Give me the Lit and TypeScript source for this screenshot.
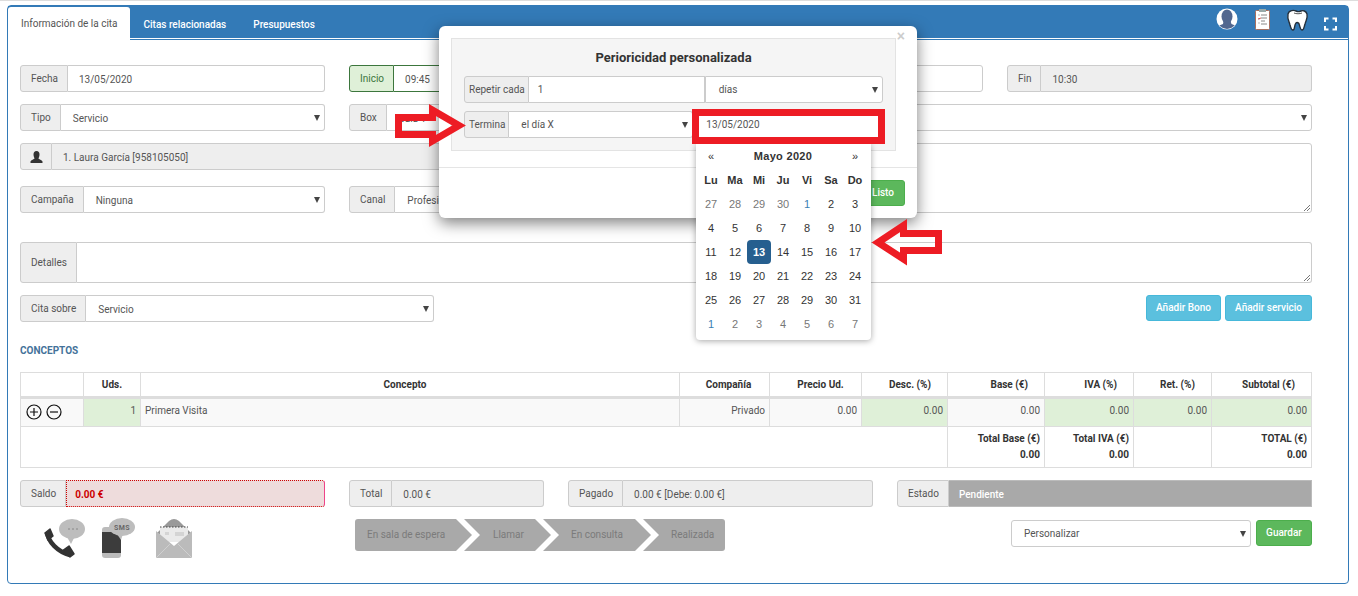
import { LitElement, html, css, svg } from "lit";
import { customElement } from "lit/decorators.js";

const resize = html`<svg class="grip" width="9" height="9" viewBox="0 0 9 9"><path d="M8 2 2 8M8 5 5 8" stroke="#777" fill="none"/></svg>`;

const weeks: [number, string][][] = [
  [[27,"o"],[28,"o"],[29,"o"],[30,"o"],[1,"b"],[2,""],[3,""]],
  [[4,""],[5,""],[6,""],[7,""],[8,""],[9,""],[10,""]],
  [[11,""],[12,""],[13,"s"],[14,""],[15,""],[16,""],[17,""]],
  [[18,""],[19,""],[20,""],[21,""],[22,""],[23,""],[24,""]],
  [[25,""],[26,""],[27,""],[28,""],[29,""],[30,""],[31,""]],
  [[1,"b"],[2,"o"],[3,"o"],[4,"o"],[5,"o"],[6,"o"],[7,"o"]],
];

@customElement("app-root")
export class AppRoot extends LitElement {
  static styles = css`
    :host { display: block; position: relative; width: 1358px; height: 596px; overflow: hidden; background: #fff;
      font: 10px/14px Roboto, "Liberation Sans", sans-serif; color: #555; }
    * { box-sizing: border-box; }
    .topline { height: 1px; background: #ddd; }
    .frame { margin: 4px 0 0 7px; width: 1342px; height: 579px; border: 1px solid #337ab7; border-radius: 4px; }
    .tabs { height: 34px; background: #337ab7; border-bottom: 1px solid #337ab7; box-shadow: inset 0 -1px 0 #fff; display: flex; padding: 1px 0 0 0; align-items: stretch; position: relative; }
    .tab { color: #fff; font-weight: 500; padding: 11px 13.5px 0; font-size: 10px; }
    .tab.on { background: #fff; color: #555; font-weight: 400; width: 122px; margin-bottom: -1px; border-radius: 3px 3px 0 0; padding: 10px 0 0 13px; }
    .tools { margin-left: auto; margin-right: 6px; margin-top: -1px; display: flex; align-items: flex-start; }
    .tools svg { display: block; }
    .body { padding: 25px 36px 0 12px; }
    .grid { display: grid; grid-template-columns: repeat(4, 305px); column-gap: 24px; row-gap: 12px; grid-template-rows: 27px 27px 31px 27px; }
    .ig { display: flex; height: 27px; }
    .addon { display: flex; align-items: center; padding: 0 9px 0 10px; background: #eee; border: 1px solid #ccc; border-radius: 3px 0 0 3px; height: 27px; color: #555; white-space: nowrap; flex: none; }
    .ctl { flex: 1; min-width: 0; display: flex; align-items: center; padding: 2px 11px 0; border: 1px solid #ccc; border-left: 0; border-radius: 0 3px 3px 0; background: #fff; position: relative; white-space: nowrap; overflow: hidden; }
    .ctl.sel { padding: 2px 11px 0 12px; }
    .ctl.sel::after { content: ""; position: absolute; right: 4px; top: 10px; border: 3.5px solid transparent; border-top: 6px solid #444; border-bottom: 0; }
    .ctl.ro { background: #eee; }
    .ig.green .addon { background: #dff0d8; border-color: #3c763d; color: #3c763d; }
    .ig.green .ctl { border-color: #3c763d; }
    .w2 { grid-column: span 2; }
    .note { grid-column: 3 / span 2; grid-row: 3 / span 2; border: 1px solid #ccc; border-radius: 3px; position: relative; height: 70px; }
    .grip { position: absolute; right: 0; bottom: 0; }
    .addon.user { padding: 0 8px 0 9px; }
    .plain { height: 27px; border: 1px solid #ccc; border-radius: 3px; position: relative; }
    .plain.sel::after { content: ""; position: absolute; right: 4px; top: 10px; border: 3.5px solid transparent; border-top: 6px solid #444; border-bottom: 0; }
    .details { margin-top: 29px; height: 41px; display: flex; }
    .details .addon { height: 41px; }
    .details .area { flex: 1; border: 1px solid #ccc; border-left: 0; border-radius: 0 3px 3px 0; position: relative; }
    .actions { margin-top: 12px; display: flex; align-items: flex-start; }
    .actions .ig { width: 414px; }
    .right { margin-left: auto; display: flex; gap: 4px; }
    .btn { height: 26px; display: flex; align-items: center; justify-content: center; color: #fff; font-weight: 500; border-radius: 3px; border: 1px solid #46b8da; background: #5bc0de; }
    .bono { width: 75px; } .serv { width: 87px; }
    .title { margin-top: 22px; height: 14px; font-weight: 700; color: #44729a; }
    table { margin-top: 14px; border-collapse: collapse; table-layout: fixed; width: 1291px; }
    th, td { border: 1px solid #ddd; padding: 0 4px; font-size: 10px; }
    th { height: 25px; text-align: center; font-weight: 700; color: #333; border-bottom: 3px solid #ddd; }
    th.r { text-align: right; padding-right: 16px; }
    th.cp { padding-right: 14px; }
    th.pl { padding-left: 12px; }
    th.pl2 { padding-left: 14px; }
    td { height: 29px; text-align: right; }
    tbody tr.item td { background: #f9f9f9; padding-bottom: 3px; }
    tbody tr.item td.g { background: #dff0d8; }
    tbody tr.item td.l { text-align: left; }
    tbody tr.item td.act { padding: 0 0 2px 4px; text-align: left; }
    .act svg { display: block; }
    tr.tot td { height: 41px; font-weight: 700; color: #333; line-height: 16px; background: #fff; }
    .foot { margin-top: 12px; display: grid; grid-template-columns: 305px 195px 305px 415px; column-gap: 24px; }
    .ctl.saldo { background: #eedcdc; color: #c00; font-weight: 700; border: 1px dotted #c00; border-right: 1px solid #e48; padding-left: 8px; }
    .estado { background: #a9a9a9; color: #fff; font-weight: 500; border-color: #bbb; border-radius: 0; padding-left: 10px; }
    .bottom { margin-top: 11px; display: flex; align-items: flex-start; }
    .icons { margin-left: 23px; width: 312px; display: flex; }
    .icons svg { display: block; flex: none; }
    .i2 { margin-left: 17px; } .i3 { margin-left: 21px; }
    .steps { display: flex; height: 32px; margin-top: 1px; width: 656px; }
    .step { background: #a9a9a9; color: #7b7b7b; display: flex; align-items: center; height: 32px; flex: none; clip-path: polygon(0 0, calc(100% - 16px) 0, 100% 50%, calc(100% - 16px) 100%, 0 100%, 16px 50%); margin-right: -8px; }
    .step.s1 { width: 117px; padding: 0 0 1px 12px; clip-path: polygon(0 0, calc(100% - 16px) 0, 100% 50%, calc(100% - 16px) 100%, 0 100%); border-radius: 3px 0 0 3px; }
    .step.s2 { width: 87px; padding: 0 0 1px 29px; }
    .step.s3 { width: 108px; padding: 0 0 1px 28px; }
    .step.s4 { width: 82px; padding: 0 0 1px 28px; clip-path: polygon(0 0, 100% 0, 100% 100%, 0 100%, 16px 50%); margin-right: 0; border-radius: 0 3px 3px 0; }
    .pers { width: 240px; height: 27px; margin-top: 2px; border: 1px solid #ccc; border-radius: 3px; display: flex; align-items: center; padding-left: 12px; position: relative; }
    .pers::after { content: ""; position: absolute; right: 4px; top: 10px; border: 3.5px solid transparent; border-top: 6px solid #444; border-bottom: 0; }
    .guardar { width: 56px; margin: 2px 0 0 5px; background: #5cb85c; border-color: #4cae4c; }

    .modal { position: absolute; left: 439px; top: 26px; width: 478px; height: 192px; background: #fff; border-radius: 6px; box-shadow: 0 5px 15px rgba(0,0,0,.5); padding: 12px; }
    .close { position: absolute; right: 12px; top: 3px; font: 700 14px/14px "Liberation Sans", sans-serif; color: #ccc; }
    .well { width: 445px; height: 113px; background: #f5f5f5; border: 1px solid #e3e3e3; padding: 0 12px; }
    .well h4 { margin: 11px 0 11px; font-size: 13px; line-height: 15px; font-weight: 700; text-align: center; color: #333; }
    .mrow { display: flex; width: 419px; margin-bottom: 8px; }
    .mrow .addon { padding: 0 3px 0 4px; }
    .mrow .ctl { padding-top: 1px; }
    .mrow .in1 { width: 176px; flex: none; border-radius: 0; padding-left: 9px; }
    .mrow .rep { flex: 1; border-left: 1px solid #ccc; padding-left: 13px; }
    .ter { width: 184px; flex: none; }
    .mrow .date { width: 191px; flex: none; border: 1px solid #ccc; border-radius: 3px; background: #fff; padding-left: 12px; }
    .mfoot { position: absolute; left: 0; right: 0; top: 141px; border-top: 1px solid #e5e5e5; }
    .listo { position: absolute; left: 400px; top: 154px; width: 66px; height: 26px; background: #5cb85c; border-color: #4cae4c; justify-content: flex-end; padding-right: 10px; }

    .cal { position: absolute; left: 696px; top: 144px; width: 175px; height: 196px; background: #fff; border-radius: 0 0 4px 4px; box-shadow: 0 1px 6px rgba(0,0,0,.35); padding: 0 3px; display: grid; grid-template-columns: repeat(7, 24px); grid-auto-rows: 24px; font: 11px/24px "Liberation Sans", Roboto, sans-serif; color: #333; text-align: center; }
    .cal .nav { grid-column: span 1; }
    .cal .mon { grid-column: span 5; font-weight: 700; letter-spacing: .3px; }
    .cal .dn { font-weight: 700; }
    .cal .o { color: #777; }
    .cal .b { color: #3b7fb2; }
    .cal .s { background: #265f8f; color: #fff; font-weight: 700; border-radius: 4px; }
    .red { position: absolute; left: 0; top: 0; pointer-events: none; }
  `;

  private field(label: string, value: string, cls = "", extra = "") {
    return html`<div class="ig ${extra}"><span class="addon">${label}</span><span class="ctl ${cls}">${value}</span></div>`;
  }

  private tools() {
    return html`<div class="tools">
      <svg width="126" height="30" viewBox="0 0 126 30">
        <defs><clipPath id="pc"><circle cx="11" cy="13" r="10"/></clipPath></defs>
        <circle cx="11" cy="13" r="10.5" fill="#fff"/>
        <g clip-path="url(#pc)" fill="#52678f"><ellipse cx="11" cy="10.5" rx="5.5" ry="7"/><path d="M7.500 15h7l1 3 5 2 1 4H1l1-4 5-2z"/></g>
        <rect x="39.5" y="4.5" width="14" height="19" rx="1" fill="#fff" stroke="#a8705f"/>
        <rect x="43" y="3" width="7" height="3" fill="#9aa"/>
        <path d="M42 9h2M42 13h2M42 17h2" stroke="#bbb"/>
        <path d="M45 9h6M45 12h6M45 15h4M45 18h6" stroke="#888"/>
        <path d="M42 13l3-1" stroke="#d55"/>
        <path d="M72 8c-1 5 1 7 2 11 1 3 1 5 3 5s1-5 3-7c1-1 3 0 3 1 1 2 1 6 3 6s2-3 3-6c1-4 3-6 2-10-1-3-4-4-6-3s-3 1-5 0-7-1-8 3z" fill="#fff" stroke="#24303c" stroke-width="1.4"/>
        <path d="M78 7c2 1 6 1 8 0" stroke="#555" fill="none"/>
        <path d="M110.500 18v-3.500h3.500M118 14.500h3.500V18M121.500 22v3.500H118M114 25.500h-3.500V22" stroke="#fff" stroke-width="2" fill="none" transform="translate(-1.500 -2)"/>
      </svg>
    </div>`;
  }

  private plusMinus() {
    return svg`<circle cx="9" cy="9" r="7" fill="none" stroke="#111" stroke-width="1.2"/><path d="M5 9h8M9 5v8" stroke="#111" stroke-width="1.2"/>
      <circle cx="29" cy="9" r="7" fill="none" stroke="#111" stroke-width="1.2"/><path d="M25 9h8" stroke="#111" stroke-width="1.2"/>`;
  }

  render() {
    return html`
      <div class="topline"></div>
      <div class="frame">
        <div class="tabs">
          <div class="tab on">Información de la cita</div>
          <div class="tab">Citas relacionadas</div>
          <div class="tab">Presupuestos</div>
          ${this.tools()}
        </div>
        <div class="body">
          <div class="grid">
            ${this.field("Fecha", "13/05/2020")}
            ${this.field("Inicio", "09:45", "", "green")}
            <div class="plain"></div>
            ${this.field("Fin", "10:30", "ro")}
            ${this.field("Tipo", "Servicio", "sel")}
            ${this.field("Box", "Sala 1", "sel")}
            <div class="w2 plain sel"></div>
            <div class="w2"><div class="ig"><span class="addon user"><svg width="13" height="12" viewBox="0 0 13 12"><path d="M6.500 0c2 0 3 1.500 3 3.500S8.500 7 8.500 7.500 12 9 12.500 10.500V12H.5v-1.500C1 9 4.500 8 4.500 7.500S3.500 5.500 3.500 3.500 4.500 0 6.500 0z" fill="#333"/></svg></span><span class="ctl ro">1. Laura García [958105050]</span></div></div>
            <div class="note">${resize}</div>
            ${this.field("Campaña", "Ninguna", "sel")}
            ${this.field("Canal", "Profesional", "sel")}
          </div>
          <div class="details"><span class="addon">Detalles</span><div class="area">${resize}</div></div>
          <div class="actions">
            ${this.field("Cita sobre", "Servicio", "sel")}
            <div class="right"><div class="btn bono">Añadir Bono</div><div class="btn serv">Añadir servicio</div></div>
          </div>
          <div class="title">CONCEPTOS</div>
          <table>
            <colgroup><col style="width:63px"/><col style="width:57px"/><col style="width:539px"/><col style="width:90px"/><col style="width:92px"/><col style="width:86px"/><col style="width:97px"/><col style="width:89px"/><col style="width:78px"/><col style="width:100px"/></colgroup>
            <thead><tr>
              <th></th><th>Uds.</th><th class="cp">Concepto</th><th class="pl">Compañía</th><th class="pl2">Precio Ud.</th>
              <th class="r">Desc. (%)</th><th class="r">Base (€)</th><th class="r">IVA (%)</th><th class="r">Ret. (%)</th><th class="r">Subtotal (€)</th>
            </tr></thead>
            <tbody>
              <tr class="item">
                <td class="act"><svg width="38" height="18" viewBox="0 0 38 18">${this.plusMinus()}</svg></td>
                <td class="g">1</td><td class="l">Primera Visita</td><td>Privado</td><td>0.00</td>
                <td class="g">0.00</td><td>0.00</td><td class="g">0.00</td><td class="g">0.00</td><td class="g">0.00</td>
              </tr>
              <tr class="tot">
                <td colspan="6"></td>
                <td>Total Base (€)<br/>0.00</td><td>Total IVA (€)<br/>0.00</td><td></td><td>TOTAL (€)<br/>0.00</td>
              </tr>
            </tbody>
          </table>
          <div class="foot">
            ${this.field("Saldo", "0.00 €", "saldo")}
            ${this.field("Total", "0.00 €", "ro")}
            ${this.field("Pagado", "0.00 € [Debe: 0.00 €]", "ro")}
            ${this.field("Estado", "Pendiente", "estado")}
          </div>
          <div class="bottom">
            <div class="icons">
              <svg width="42" height="42" viewBox="0 0 42 42">
                <ellipse cx="29" cy="11" rx="13" ry="10" fill="#bdbdbd"/><path d="M24 19l4 7 3-6z" fill="#bdbdbd"/>
                <path d="M25 11h2M29 11h2M33 11h2" stroke="#888"/>
                <path d="M4 14c1 10 11 20 23 23" fill="none" stroke="#333" stroke-width="4.500"/>
                <path d="M2 15l5-4 3 7-5 4zM19 33l7-5 5 8-4 3z" fill="#333" stroke="#333" stroke-linejoin="round" stroke-width="1.500"/>
              </svg>
              <svg class="i2" width="33" height="41" viewBox="0 0 33 41">
                <rect y="9" width="19" height="31" rx="3" fill="#bbb"/>
                <rect y="14" width="19" height="21" fill="#3c3c3c"/>
                <ellipse cx="20" cy="9" rx="13" ry="9" fill="#bdbdbd"/><path d="M15 16h6l-2 6z" fill="#bdbdbd"/>
                <text x="20" y="12" font-family="Roboto" font-weight="700" font-size="7" text-anchor="middle" fill="#666" letter-spacing=".5">SMS</text>
              </svg>
              <svg class="i3" width="36" height="41" viewBox="0 0 36 41">
                <path d="M0 16 13 3q5-4 10 0l13 13z" fill="#999"/>
                <path d="M4 9h28v15H4z" fill="#eaeaea"/>
                <path d="M4 9h28" stroke="#444" stroke-dasharray="1.500 1.500"/>
                <path d="M9 14h4v3H9zM19 14h9v4h-9z" fill="#d4d4d4"/>
                <path d="M0 13 18 28 36 13v27H0z" fill="#bbb"/>
                <path d="M0 40 14 26M36 40 22 26" stroke="#d0d0d0" fill="none"/>
              </svg>
            </div>
            <div class="steps">
              <div class="step s1">En sala de espera</div>
              <div class="step s2">Llamar</div>
              <div class="step s3">En consulta</div>
              <div class="step s4">Realizada</div>
            </div>
            <div class="pers">Personalizar</div>
            <div class="btn guardar">Guardar</div>
          </div>
        </div>
      </div>

      <div class="modal">
        <span class="close">×</span>
        <div class="well">
          <h4>Perioricidad personalizada</h4>
          <div class="mrow"><span class="addon">Repetir cada</span><span class="ctl in1">1</span><span class="ctl sel rep">días</span></div>
          <div class="mrow"><span class="addon">Termina</span><span class="ctl sel ter">el día X</span><span class="ctl date">13/05/2020</span></div>
        </div>
        <div class="mfoot"></div>
        <div class="btn listo">Listo</div>
      </div>

      <div class="cal">
        <span class="nav">«</span><span class="mon">Mayo 2020</span><span class="nav">»</span>
        ${["Lu","Ma","Mi","Ju","Vi","Sa","Do"].map((d) => html`<span class="dn">${d}</span>`)}
        ${weeks.flat().map(([n, c]) => html`<span class=${c}>${n}</span>`)}
      </div>

      <svg class="red" width="1358" height="596" viewBox="0 0 1358 596" fill="none" stroke="#ed1c24" stroke-width="7" stroke-linejoin="miter" stroke-miterlimit="6">
        <path d="M398.500 117.500H432.500V110L459 125.500 432.500 141V134.500H398.500z"/>
        <rect x="695.500" y="112.500" width="186" height="28"/>
        <path d="M938.500 233.500H903.500V225.500L878 242.500 903.500 259V250.500H938.500z"/>
      </svg>
    `;
  }
}
